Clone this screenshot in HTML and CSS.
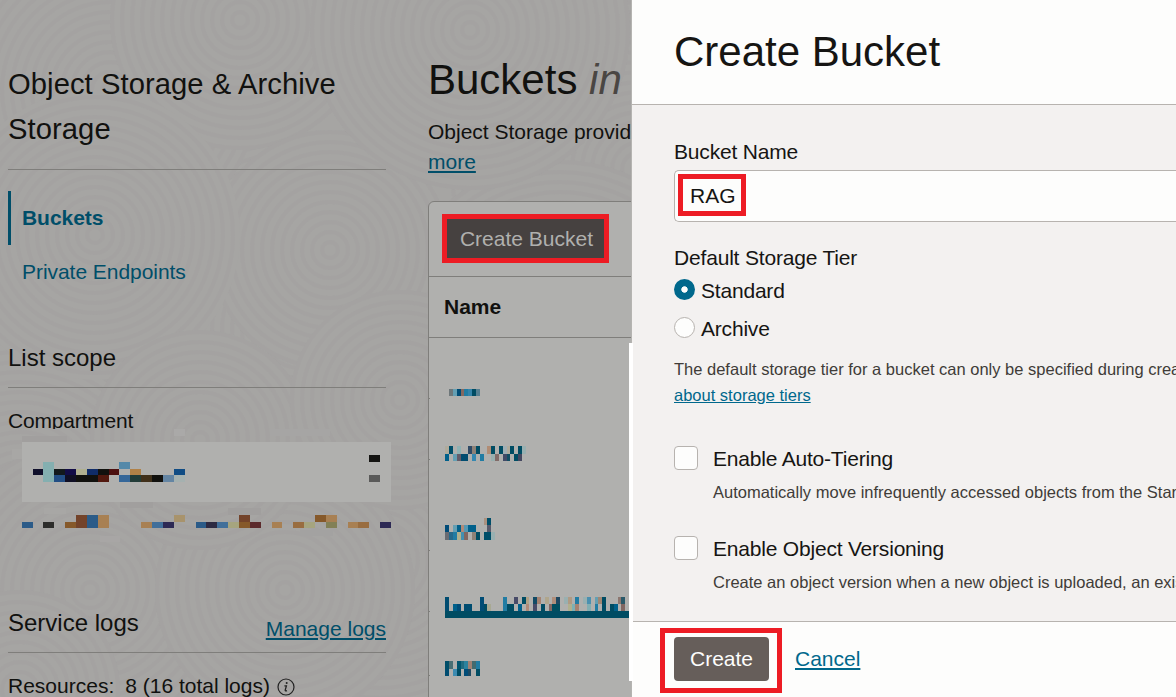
FILE: index.html
```html
<!DOCTYPE html>
<html lang="en">
<head>
<meta charset="utf-8">
<title>Create Bucket</title>
<link rel="stylesheet" href="styles.css">
</head>
<body>
<div class="app">
  <svg class="texture" viewBox="0 0 631 697"></svg>
  <aside class="sidebar">
    <h2 class="service-title">Object Storage &amp; Archive Storage</h2>
    <nav class="nav">
      <a class="nav-item active">Buckets</a>
      <a class="nav-item">Private Endpoints</a>
    </nav>
    <h3 class="section-title">List scope</h3>
    <div class="field-label">Compartment</div>
    <svg class="mosaic compartment" viewBox="8 429 390 176" data-mosaic="compartment"></svg>
    <div class="section-title logs-title"><span>Service logs</span><a class="manage">Manage logs</a></div>
    <div class="resources"><span>Resources:</span><span class="count">8 (16 total logs)</span>
      <svg class="info" viewBox="0 0 18 18"><circle cx="9" cy="9" r="8" fill="none" stroke="#222" stroke-width="1.2"/><circle cx="9.7" cy="5" r="1" fill="#222"/><path d="M7.4 7.8H9.4L8.2 12.2Q8 13.3 10 12.6" fill="none" stroke="#222" stroke-width="1.3"/></svg>
    </div>
  </aside>

  <main class="content">
    <h1 class="page-title">Buckets <em>in</em></h1>
    <p class="intro">Object Storage provid<br><a class="link-dim">more</a></p>
    <section class="table">
      <div class="toolbar"><button class="create-bucket">Create Bucket</button></div>
      <div class="column-head">Name</div>
      <svg class="mosaic rows" viewBox="429 338 202 359" data-mosaic="rows"></svg>
    </section>
  </main>

  <section class="panel">
    <header class="panel-head"><h1>Create Bucket</h1></header>
    <div class="panel-body">
      <label class="label">Bucket Name</label>
      <div class="input"><span class="highlight">RAG</span></div>
      <div class="label tier-label">Default Storage Tier</div>
      <div class="radio-row"><span class="radio on"></span>Standard</div>
      <div class="radio-row second"><span class="radio"></span>Archive</div>
      <p class="help">The default storage tier for a bucket can only be specified during creation.<br><a class="link">about storage tiers</a></p>
      <div class="option">
        <span class="check"></span>
        <div><div class="option-name">Enable Auto-Tiering</div><p class="option-help">Automatically move infrequently accessed objects from the Standard</p></div>
      </div>
      <div class="option">
        <span class="check"></span>
        <div><div class="option-name">Enable Object Versioning</div><p class="option-help">Create an object version when a new object is uploaded, an existing</p></div>
      </div>
    </div>
    <footer class="panel-foot">
      <div class="create-frame"><button class="create">Create</button></div>
      <a class="link cancel">Cancel</a>
    </footer>
  </section>
  <div class="strip"></div>
</div>
<script src="mosaic.js"></script>
</body>
</html>
```

FILE: styles.css
```css
* { box-sizing: border-box; }
body { margin: 0; font-family: "Liberation Sans", Arial, sans-serif; font-size: 21px; color: #11110f; overflow: hidden; }
h1, h2, h3, p { margin: 0; font-weight: 400; }
button { font: inherit; border: 0; padding: 0; }

.app {
  position: relative;
  display: grid;
  grid-template-columns: 428px 203px 545px;
  width: 1176px;
  height: 697px;
  overflow: hidden;
  background-color: #a6a5a3;
}
.texture { position: absolute; left: 0; top: 0; width: 631px; height: 697px; }

.sidebar { position: relative; padding: 62px 42px 0 8px; }
.service-title { height: 108px; font-size: 29.2px; letter-spacing: 0.07px; line-height: 45px; border-bottom: 1px solid #7f7e7b; }
.nav { padding-top: 21px; margin-bottom: 41px; }
.nav-item { display: block; height: 54px; line-height: 54px; padding-left: 11px; border-left: 3px solid transparent; color: #004e69; letter-spacing: -0.05px; }
.nav-item.active { font-weight: 700; border-color: #004e69; }
.section-title { height: 48px; font-size: 24px; line-height: 36px; border-bottom: 1px solid #7f7e7b; }
.field-label { height: 24px; margin-top: 17px; line-height: 32px; letter-spacing: -0.2px; overflow: hidden; }
.mosaic { display: block; shape-rendering: crispEdges; }
.compartment { width: 390px; height: 176px; }
.logs-title { display: flex; justify-content: space-between; }
.manage { font-size: 21px; line-height: 48px; color: #004e69; text-decoration: underline; text-decoration-thickness: 2px; text-underline-offset: 2px; }
.resources { display: flex; align-items: center; margin-top: 17px; height: 32px; }
.count { margin-left: 11px; }
.info { width: 18px; height: 18px; margin-left: 7px; margin-top: 2px; }

.content { position: relative; padding-top: 48px; overflow: hidden; white-space: nowrap; }
.page-title { font-size: 42px; line-height: 63px; }
.page-title em { color: #4a4643; }
.intro { padding-top: 6px; line-height: 30px; }
.link-dim { color: #004e69; text-decoration: underline; text-decoration-thickness: 2px; text-underline-offset: 2px; }
.table { margin-top: 24px; width: 220px; height: 510px; border: 1px solid #7f7e7b; border-radius: 6px 0 0 0; background: #b0b0ae; }
.toolbar { height: 75px; padding: 12px 0 0 13px; border-bottom: 1px solid #7f7e7b; }
.create-bucket { width: 167px; height: 49px; padding-left: 2px; border: 5px solid #ed1c24; background: #464140; color: #b0b0ae; }
.column-head { height: 61px; line-height: 60px; padding-left: 15px; font-weight: 700; border-bottom: 1px solid #7f7e7b; }
.rows { width: 202px; height: 359px; }

.panel { position: relative; display: grid; grid-template-rows: 105px 516px 76px; border-left: 1px solid #b5b4b1; background: #fdfdfc; color: #161513; white-space: nowrap; overflow: hidden; }
.panel-head { padding-left: 42px; border-bottom: 1px solid #b7b3af; }
.panel-head h1 { font-size: 42px; line-height: 63px; padding-top: 20px; }
.panel-body { padding: 32px 0 0 42px; background: #f3f1f0; overflow: hidden; }
.label { display: block; height: 33px; line-height: 30px; letter-spacing: -0.18px; }
.input { height: 52px; padding: 3px; border: 1px solid #b7b3af; border-right: 0; border-radius: 5px 0 0 5px; background: #fdfdfc; }
.highlight { display: block; width: 68px; height: 42px; border: 5px solid #ed1c24; line-height: 33px; padding-left: 7px; }
.tier-label { margin-top: 21px; }
.radio-row { display: flex; align-items: center; height: 30px; gap: 6px; letter-spacing: -0.2px; }
.radio-row.second { margin-top: 8px; }
.radio { width: 21px; height: 21px; margin-top: -3px; border: 1px solid #b7b3af; border-radius: 50%; background: #fdfdfc; }
.radio.on { border: 0; background: radial-gradient(circle, #fdfdfc 2.8px, #00688c 3.6px); }
.help { margin-top: 12px; font-size: 16.5px; line-height: 26px; color: #403c38; }
.link { color: #00688c; text-decoration: underline; }
.option { display: flex; gap: 15px; height: 90px; }
.help + .option { margin-top: 36px; }
.check { flex: none; width: 24px; height: 24px; margin-top: 2px; border: 1px solid #b7b3af; border-radius: 4px; background: #fdfdfc; }
.option-name { line-height: 30px; letter-spacing: -0.2px; }
.option-help { margin-top: 5px; font-size: 16.5px; line-height: 26px; color: #403c38; }
.panel-foot { display: flex; align-items: flex-start; padding: 6px 0 0 28px; border-top: 1px solid #b7b3af; background: #fdfdfc; }
.create-frame { width: 122px; height: 65px; padding: 4px 8px 6px 9px; border: 5px solid #ed1c24; }
.create { display: block; width: 95px; height: 44px; border-radius: 4px; background: #665e5a; color: #fdfdfc; }
.cancel { margin: 16px 0 0 13px; line-height: 30px; text-decoration-thickness: 2px; text-underline-offset: 2px; }
.strip { position: absolute; left: 629px; top: 343px; width: 4px; height: 338px; background: #fff; }
```

FILE: mosaic.js
```js
// Contour background: overlapping discs of rings, cx, cy, radius
const discs = [
  [300, 330, 190], [110, 90, 150], [640, 170, 190], [380, 560, 170],
  [20, 500, 160], [240, 20, 130], [560, 330, 170], [330, 250, 120],
  [95, 235, 145], [470, 30, 160], [90, 590, 150], [285, 590, 130],
  [200, 440, 110], [20, 690, 100], [400, 400, 110]
];
document.querySelector(".texture").innerHTML = discs.map(([cx, cy, r]) => {
  let rings = `<circle cx="${cx}" cy="${cy}" r="${r}" fill="#a6a5a3"/>`;
  for (let i = 8; i < r; i += 10) {
    rings += `<circle cx="${cx}" cy="${cy}" r="${i}" fill="none" stroke="#a1a09f" stroke-opacity=".45" stroke-width="4"/>`;
  }
  return rings;
}).join("");

// Each entry: x, y, width, height, fill
const data = {
  compartment: `
12 449 10 10 #a8a7a5
22 436 45 6 #a19f9e
174 429 11 7 #aaa9a8
270 429 60 7 #a6a5a4
44 508 22 6 #a8a7a5
120 502 33 6 #a19f9e
228 508 33 7 #a19f9e
100 536 20 6 #a8a6a5
300 530 33 6 #a3a2a1
22 442 369 60 #b0b0ae
33 469 10 6 #10102b
43 462 11 20 #84afb0
54 469 11 6 #12191c
54 475 11 7 #224e84
65 469 11 6 #120c46
65 475 11 7 #100f25
76 469 11 6 #b0b090
76 475 22 7 #11110e
87 469 11 6 #102c68
98 469 11 6 #11110e
98 475 11 7 #52190f
109 469 10 6 #4c1010
119 462 11 7 #5589a9
119 475 11 7 #356799
130 469 11 6 #b18147
130 475 11 7 #223c38
141 475 11 7 #40301a
152 475 11 7 #11110e
163 475 11 7 #6485a3
174 469 11 6 #104c84
174 475 11 7 #a5b1b0
369 455 11 7 #141412
369 475 11 7 #5a5a59
22 522 11 6 #2b5b88
43 522 11 6 #2d2d2b
65 522 11 6 #86592a
76 515 11 13 #73432a
87 515 11 13 #2b5b88
98 515 11 13 #a88053
141 522 11 6 #a88053
152 522 11 6 #416f9a
163 522 11 6 #2d2954
174 515 11 7 #a8936c
196 522 10 6 #2b5b88
206 522 11 6 #2d2a42
217 522 11 6 #416f9a
228 522 11 6 #a6a57f
239 515 11 7 #73432a
239 522 11 6 #86592a
250 522 11 6 #5c2a2c
272 522 10 6 #a88053
293 522 11 6 #996d40
304 522 11 6 #a6a57f
315 515 11 7 #86592a
326 515 11 7 #a88053
326 522 11 6 #828056
348 522 10 6 #a88053
358 522 11 6 #996d40
380 522 11 6 #2d2954`,
  rows: `
429 398 1 1 #7f7e7b
429 459 1 1 #7f7e7b
429 550 1 1 #7f7e7b
429 611 1 1 #7f7e7b
429 675 1 1 #7f7e7b
449 389 4 7 #6e777a
453 389 4 7 #649fb3
457 389 4 7 #004c75
461 389 3 7 #85685f
464 389 4 7 #217ca3
468 389 4 7 #3584aa
472 389 4 7 #004c63
476 389 4 7 #567f91
445 446 4 8 #b0ab9c
449 446 4 8 #004e69
457 446 4 8 #8fb2b4
468 446 4 8 #2f4a66
472 446 4 8 #8d8177
476 446 4 8 #004c63
487 446 4 8 #b18c74
491 446 4 8 #004c63
499 446 4 8 #004c63
503 446 4 8 #a0afb5
507 446 3 8 #b0ab9c
510 446 4 8 #004c63
518 446 4 8 #004c63
522 446 4 8 #99b0b1
445 454 4 7 #00608b
453 454 4 7 #649fb3
457 454 4 7 #645b69
461 454 7 7 #004c70
472 454 4 7 #3588b1
480 454 4 7 #217ca3
491 454 4 7 #98afae
495 454 4 7 #816b68
503 454 4 7 #414a66
507 454 3 7 #124d63
514 454 4 7 #004c63
518 454 4 7 #454760
484 518 3 7 #aa9180
487 518 4 7 #004e69
445 525 4 7 #004c78
453 525 4 7 #649fb3
457 525 4 7 #00608b
461 525 3 7 #b08a78
464 525 4 7 #5598b3
468 525 8 7 #00608b
487 525 4 7 #57596a
445 532 4 8 #686b72
449 532 4 8 #26698a
453 532 4 8 #217ca3
457 532 4 8 #b0b08e
461 532 3 8 #4390b2
464 532 4 8 #816762
472 532 4 8 #8d8177
476 532 4 8 #004c63
484 532 7 8 #004e69
491 532 4 8 #99b0b1
445 597 4 14 #004c70
453 604 4 7 #00608b
457 604 4 7 #004c78
464 604 8 7 #004c70
480 597 4 14 #004c75
484 604 3 7 #004c63
487 604 4 7 #a8a993
503 597 4 14 #217ca3
507 604 7 7 #004c63
514 597 4 7 #484b68
518 604 4 7 #00608b
522 597 4 7 #004c63
526 597 3 7 #b0a186
526 604 3 7 #b08a78
533 597 4 7 #124a65
533 604 4 7 #484b68
537 597 4 7 #a58271
541 604 4 7 #004c63
545 597 4 7 #b0a68c
549 604 3 7 #816762
552 597 4 7 #b08e7b
552 604 8 7 #004e60
556 597 4 7 #1f4861
564 597 4 7 #99b0b1
568 597 4 7 #b09a83
568 604 4 7 #b0b08e
572 604 3 7 #7eb0b4
575 597 4 7 #217ca3
575 604 4 7 #a58271
583 597 4 7 #99b0b1
587 597 4 7 #4b90b0
587 604 4 7 #82aeb2
595 597 3 7 #64a0b4
595 604 3 7 #217ca3
598 597 4 7 #a08773
602 597 4 14 #004c63
610 604 4 7 #004c63
614 604 4 7 #00608b
618 597 3 7 #8d7770
621 597 4 7 #2a5969
621 604 4 7 #816762
445 611 186 7 #004c63
445 661 4 8 #004e69
449 661 4 8 #486e74
457 661 4 8 #00556f
461 661 3 8 #216b80
464 661 4 8 #2b829e
468 661 4 8 #a08173
472 661 4 8 #426b70
476 661 4 8 #217ca3
445 669 4 7 #004c70
453 669 4 7 #3c8bb1
457 669 4 7 #004c63
464 669 4 7 #004c78
468 669 3 7 #1c4862
476 669 4 7 #004c63`
};

document.querySelectorAll("[data-mosaic]").forEach(svg => {
  svg.innerHTML = data[svg.dataset.mosaic].trim().split("\n").map(line => {
    const [x, y, w, h, fill] = line.split(" ");
    return `<rect x="${x}" y="${y}" width="${w}" height="${h}" fill="${fill}"/>`;
  }).join("");
});
```
